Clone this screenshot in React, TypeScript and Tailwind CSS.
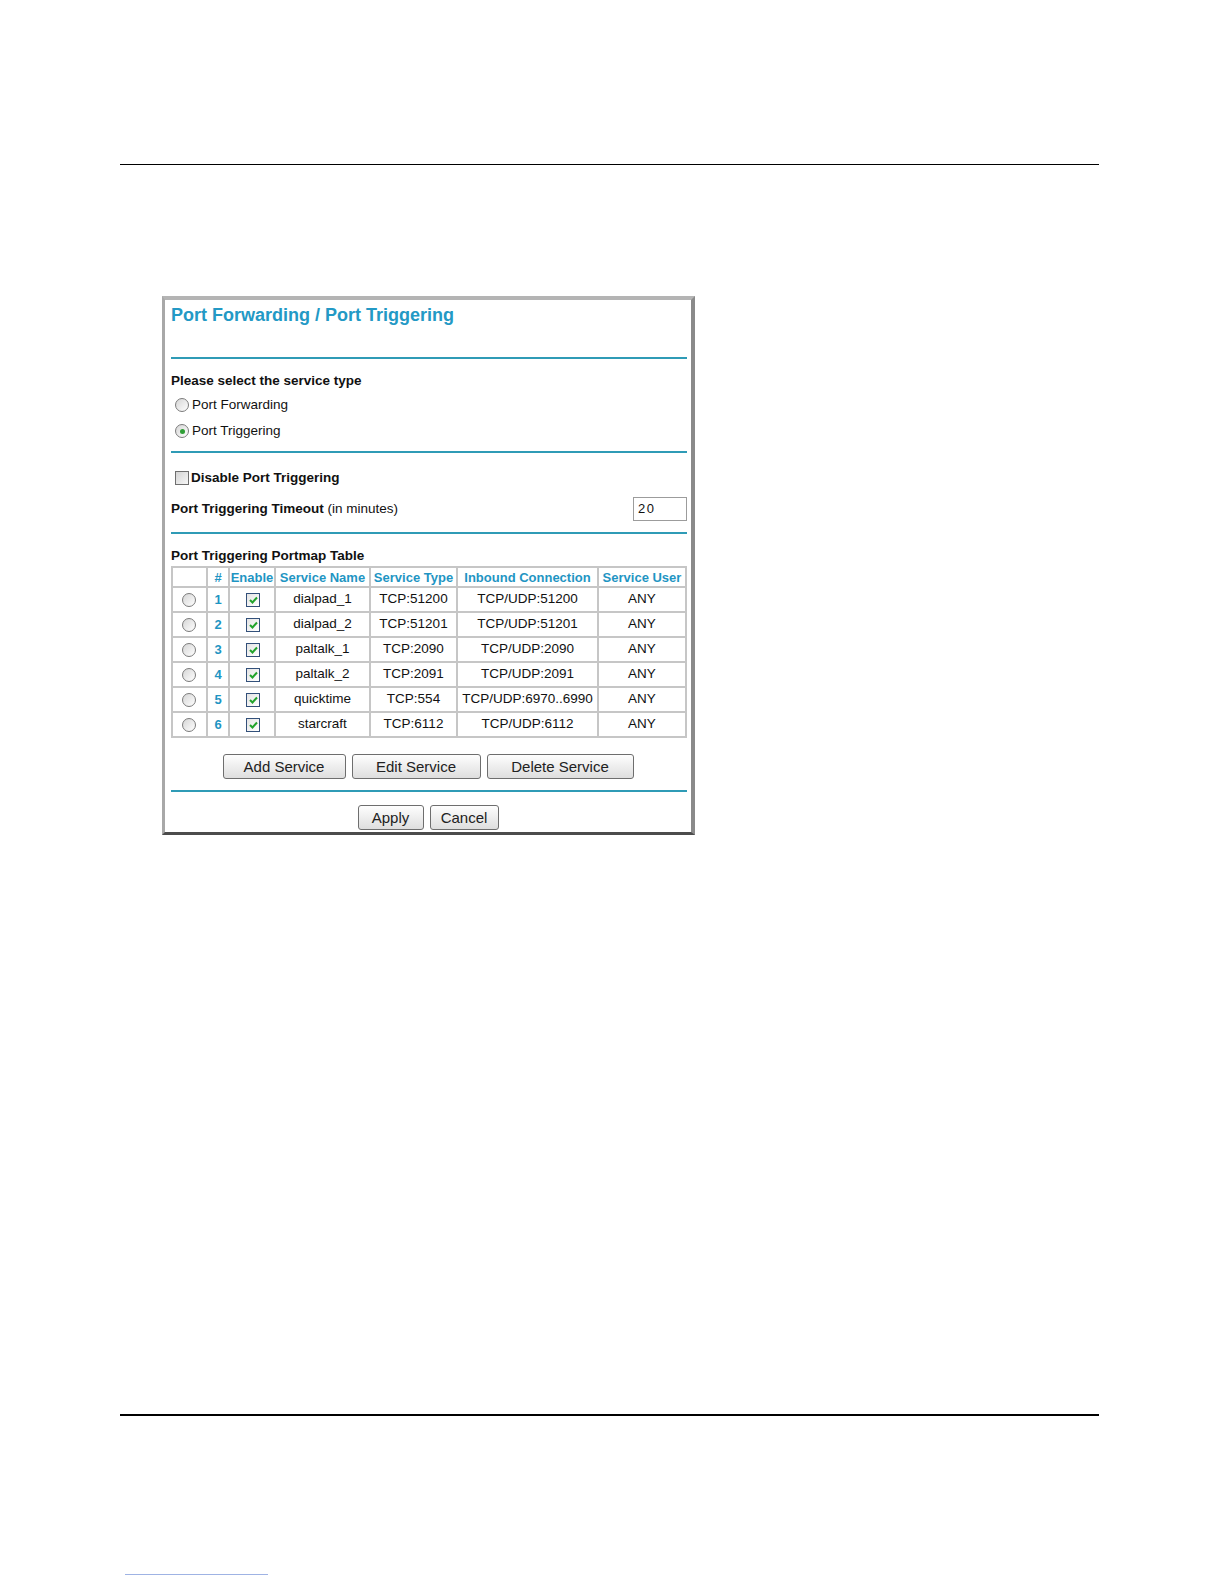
import React from "react";

const rows = [
  { n: 1, name: "dialpad_1", type: "TCP:51200", inbound: "TCP/UDP:51200" },
  { n: 2, name: "dialpad_2", type: "TCP:51201", inbound: "TCP/UDP:51201" },
  { n: 3, name: "paltalk_1", type: "TCP:2090", inbound: "TCP/UDP:2090" },
  { n: 4, name: "paltalk_2", type: "TCP:2091", inbound: "TCP/UDP:2091" },
  { n: 5, name: "quicktime", type: "TCP:554", inbound: "TCP/UDP:6970..6990" },
  { n: 6, name: "starcraft", type: "TCP:6112", inbound: "TCP/UDP:6112" },
];

function Radio({ on = false }: { on?: boolean }) {
  return (
    <span className="inline-flex w-[14px] h-[14px] rounded-full border border-[#7b7b7b] bg-gradient-to-br from-[#d6d6d6] to-[#ffffff] items-center justify-center shrink-0">
      {on && <span className="w-[5px] h-[5px] rounded-full bg-[#2f9e35]" />}
    </span>
  );
}

function Check({ on = false }: { on?: boolean }) {
  return (
    <span
      className={
        "inline-flex w-[14px] h-[14px] border items-center justify-center shrink-0 " +
        (on
          ? "border-[#33507a] bg-gradient-to-br from-[#e4e4e4] to-[#ffffff]"
          : "border-[#6f6f6f] bg-gradient-to-br from-[#d4d4d4] to-[#f7f7f7]")
      }
    >
      {on && (
        <svg width="9" height="8" viewBox="0 0 9 8">
          <path d="M1 4 L3.5 6.5 L8 1.5" stroke="#21a32b" strokeWidth="2" fill="none" />
        </svg>
      )}
    </span>
  );
}

function Btn({ children, w }: { children: React.ReactNode; w: string }) {
  return (
    <button
      className={
        "h-[25px] rounded-[3px] border border-[#6e6e6e] bg-gradient-to-b from-[#fefefe] to-[#dedede] text-[15px] text-[#222] leading-none " +
        w
      }
    >
      {children}
    </button>
  );
}

function Rule() {
  return <div className="h-[2px] bg-[#2f9bb6]" />;
}

export default function App() {
  const cell = "border border-[#c6c6c6] p-0 text-center";
  const head = "border border-[#c6c6c6] px-0 py-0 text-[13px] font-bold text-[#1f95c3] text-center whitespace-nowrap leading-none";
  return (
    <div className="w-[1224px] h-[1584px] bg-white flex flex-col font-['Liberation_Sans',Arial,sans-serif] text-[#111]">
      <div className="mt-[164px] ml-[120px] w-[979px] h-px bg-black" />

      <div className="mt-[131px] ml-[162px] w-[533px] border-t-[4px] border-l-[3px] border-r-[4px] border-b-[3px] border-t-[#b4b4b4] border-l-[#a8a8a8] border-r-[#8a8a8a] border-b-[#4c4c4c] pl-[6px] pr-[4px] pt-[5px] pb-[2px]">
        <div className="h-[20px] leading-[20px] text-[18px] font-bold text-[#2399c5]">
          Port Forwarding / Port Triggering
        </div>
        <div className="mt-[32px]">
          <Rule />
        </div>

        <div className="mt-[14px] h-[16px] leading-[16px] text-[13.5px] font-bold">
          Please select the service type
        </div>
        <div className="mt-[3px] pl-[4px]">
          <div className="h-[26px] flex items-center gap-[3px] text-[13.5px]">
            <Radio />
            <span>Port Forwarding</span>
          </div>
          <div className="h-[26px] flex items-center gap-[3px] text-[13.5px]">
            <Radio on />
            <span>Port Triggering</span>
          </div>
        </div>
        <div className="mt-[7px]">
          <Rule />
        </div>

        <div className="mt-[15px] h-[20px] pl-[4px] flex items-center gap-[2px] text-[13.5px] font-bold">
          <Check />
          <span>Disable Port Triggering</span>
        </div>
        <div className="mt-[9px] h-[24px] flex items-center justify-between text-[13.5px]">
          <span>
            <span className="font-bold">Port Triggering Timeout</span> (in minutes)
          </span>
          <div className="w-[54px] h-[24px] border border-[#9c9c9c] flex items-center pl-[4px] text-[13px] tracking-[1.5px]">
            20
          </div>
        </div>
        <div className="mt-[11px]">
          <Rule />
        </div>

        <div className="mt-[14px] h-[16px] leading-[16px] text-[13.5px] font-bold">
          Port Triggering Portmap Table
        </div>
        <table className="mt-[2px] w-full border-separate border-spacing-0 border border-[#c6c6c6] text-[13.5px]">
          <colgroup>
            <col className="w-[35px]" />
            <col className="w-[22px]" />
            <col className="w-[46px]" />
            <col className="w-[95px]" />
            <col className="w-[87px]" />
            <col className="w-[141px]" />
            <col />
          </colgroup>
          <thead>
            <tr className="h-[20px]">
              <th className={head}></th>
              <th className={head}>#</th>
              <th className={head}>Enable</th>
              <th className={head}>Service Name</th>
              <th className={head}>Service Type</th>
              <th className={head}>Inbound Connection</th>
              <th className={head}>Service User</th>
            </tr>
          </thead>
          <tbody>
            {rows.map((r) => (
              <tr key={r.n} className="h-[25px]">
                <td className={cell}>
                  <span className="inline-flex align-middle -translate-x-[1px]">
                    <Radio />
                  </span>
                </td>
                <td className={cell + " font-bold text-[13px] text-[#1f95c3]"}>{r.n}</td>
                <td className={cell}>
                  <span className="inline-flex align-middle translate-x-[1px]">
                    <Check on />
                  </span>
                </td>
                <td className={cell}>{r.name}</td>
                <td className={cell}>{r.type}</td>
                <td className={cell + " whitespace-nowrap"}>{r.inbound}</td>
                <td className={cell}>ANY</td>
              </tr>
            ))}
          </tbody>
        </table>

        <div className="mt-[16px] flex justify-center gap-[6px] pr-[2px]">
          <Btn w="w-[123px]">Add Service</Btn>
          <Btn w="w-[129px]">Edit Service</Btn>
          <Btn w="w-[147px]">Delete Service</Btn>
        </div>
        <div className="mt-[11px]">
          <Rule />
        </div>
        <div className="mt-[13px] flex justify-center gap-[6px] pr-[2px]">
          <Btn w="w-[66px]">Apply</Btn>
          <Btn w="w-[69px]">Cancel</Btn>
        </div>
      </div>

      <div className="mt-[579px] ml-[120px] w-[979px] h-[2px] bg-black" />
      <div className="mt-[158px] ml-[125px] w-[143px] h-px bg-[#9fb3e4]" />
    </div>
  );
}
